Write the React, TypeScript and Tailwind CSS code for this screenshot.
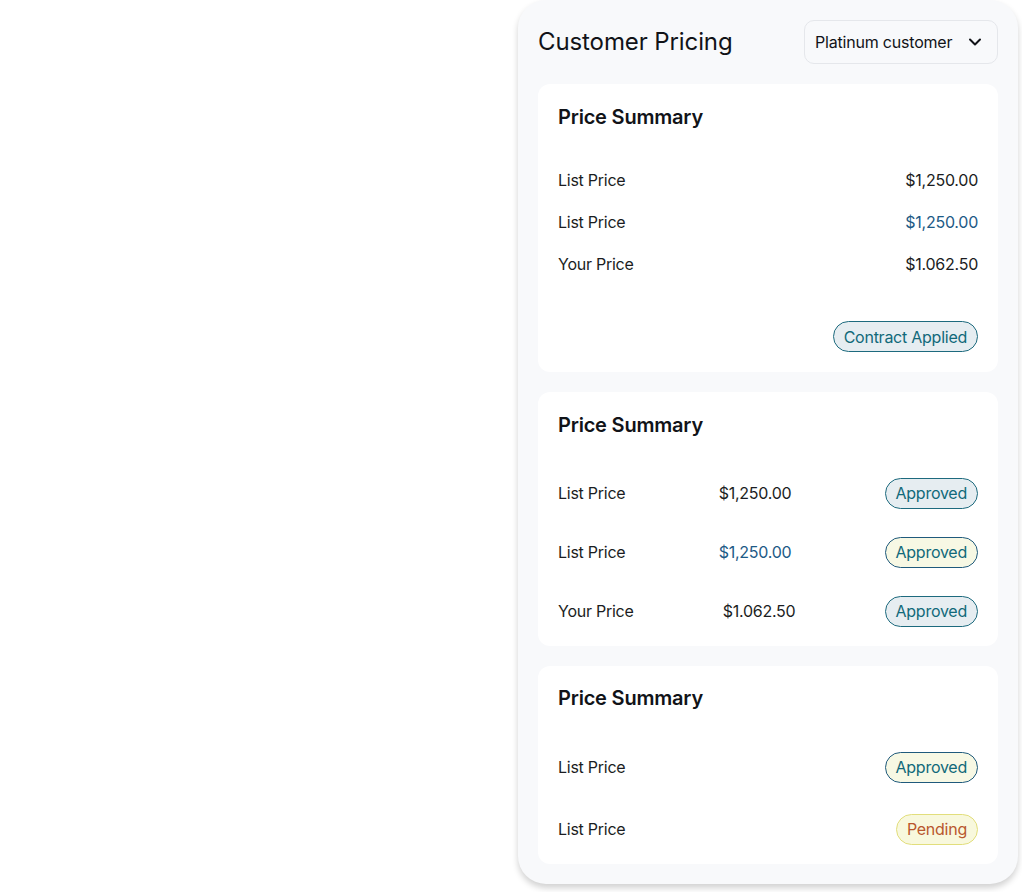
import { ChevronDown } from 'lucide-react';

type Tone = 'slate' | 'cream' | 'pending';

const badgeTone: Record<Tone, string> = {
  slate: 'bg-[#e6edf1] border-[#1d6a7e] text-[#11697a]',
  cream: 'bg-[#f7f8e4] border-[#1f5a7c] text-[#11697a]',
  pending: 'bg-[#f8f8dd] border-[#e2de7c] text-[#b9572e]',
};

const Badge = ({ label, tone }: { label: string; tone: Tone }) => (
  <span
    className={`inline-flex h-[31px] items-center rounded-full border px-[10px] text-[16px] leading-none ${badgeTone[tone]}`}
  >
    {label}
  </span>
);

const CardTitle = ({ children }: { children: string }) => (
  <h2 className="text-[20px] leading-[26px] font-semibold tracking-[-0.2px] text-[#111318]">{children}</h2>
);

const App = () => {
  return (
    <div
      className="min-h-screen bg-white flex items-start justify-end pr-1"
      style={{ fontFamily: 'Inter, "Noto Sans", sans-serif' }}
    >
      <section className="w-[500px] bg-[#f8f9fb] rounded-[28px] px-5 pt-5 pb-5 shadow-[0_4px_6px_rgba(0,0,0,0.18)]">
        {/* Header */}
        <div className="flex items-center justify-between">
          <h1 className="text-[24px] leading-[44px] text-[#111318] tracking-[-0.1px]">Customer Pricing</h1>
          <button className="flex h-[44px] w-[194px] items-center justify-between rounded-[10px] border border-[#e5e7eb] bg-[#f8f9fb] pl-[10px] pr-[12px] text-[16px] text-[#111318]">
            <span className="tracking-[-0.2px]">Platinum customer</span>
            <ChevronDown className="h-5 w-5" strokeWidth={2.4} />
          </button>
        </div>

        <div className="mt-5 flex flex-col gap-5 tracking-[-0.25px]">
          {/* Summary with contract */}
          <div className="rounded-xl bg-white px-5 pt-5 pb-5">
            <CardTitle>Price Summary</CardTitle>
            <div className="mt-[38px] flex flex-col gap-[18px] text-[16px] leading-6 text-[#1b1d22]">
              <div className="flex justify-between">
                <span>List Price</span>
                <span>$1,250.00</span>
              </div>
              <div className="flex justify-between">
                <span>List Price</span>
                <span className="text-[#1d5a86]">$1,250.00</span>
              </div>
              <div className="flex justify-between">
                <span>Your Price</span>
                <span>$1.062.50</span>
              </div>
            </div>
            <div className="mt-[45px] flex justify-end">
              <Badge label="Contract Applied" tone="slate" />
            </div>
          </div>

          {/* Summary with approvals */}
          <div className="rounded-xl bg-white px-5 pt-5 pb-[19px]">
            <CardTitle>Price Summary</CardTitle>
            <div className="mt-[39px] flex flex-col gap-[27px] text-[16px] leading-6 text-[#1b1d22]">
              <div className="flex h-8 items-center justify-between">
                <span>List Price</span>
                <span>$1,250.00</span>
                <Badge label="Approved" tone="slate" />
              </div>
              <div className="flex h-8 items-center justify-between">
                <span>List Price</span>
                <span className="text-[#1d5a86]">$1,250.00</span>
                <Badge label="Approved" tone="cream" />
              </div>
              <div className="flex h-8 items-center justify-between">
                <span>Your Price</span>
                <span>$1.062.50</span>
                <Badge label="Approved" tone="slate" />
              </div>
            </div>
          </div>

          {/* Status only */}
          <div className="rounded-xl bg-white px-5 pt-[19px] pb-[19px]">
            <CardTitle>Price Summary</CardTitle>
            <div className="mt-[40px] flex flex-col gap-[30px] text-[16px] leading-6 text-[#1b1d22]">
              <div className="flex h-8 items-center justify-between">
                <span>List Price</span>
                <Badge label="Approved" tone="cream" />
              </div>
              <div className="flex h-8 items-center justify-between">
                <span>List Price</span>
                <Badge label="Pending" tone="pending" />
              </div>
            </div>
          </div>
        </div>
      </section>
    </div>
  );
};

export default App;
